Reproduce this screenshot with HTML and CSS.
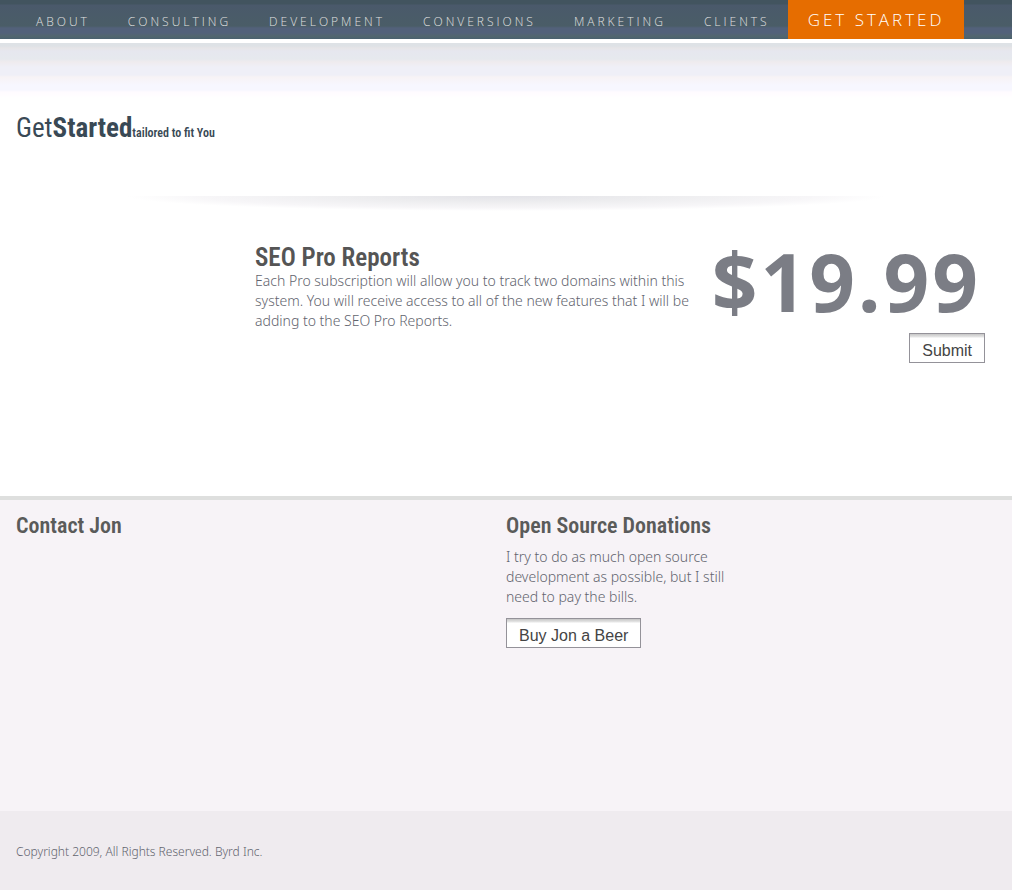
FILE: index.html
```html
<!DOCTYPE html>
<html lang="en">
<head>
<meta charset="utf-8">
<meta name="viewport" content="width=device-width, initial-scale=1">
<title>Get Started</title>
<link rel="stylesheet" href="styles.css">
</head>
<body>
<header>
  <nav class="nav" aria-label="Main">
    <a href="#">ABOUT</a>
    <a href="#">CONSULTING</a>
    <a href="#">DEVELOPMENT</a>
    <a href="#">CONVERSIONS</a>
    <a href="#">MARKETING</a>
    <a href="#">CLIENTS</a>
    <a href="#" class="nav-start">GET STARTED</a>
  </nav>
  <div class="fade"></div>
</header>
<main>
  <h1 class="page-title">Get<strong>Started</strong><small>tailored to fit You</small></h1>
  <svg class="shadow" viewBox="0 0 760 15" preserveAspectRatio="none" aria-hidden="true">
    <defs>
      <radialGradient id="glow" gradientUnits="userSpaceOnUse" cx="0" cy="0" r="1" gradientTransform="translate(380 0) scale(380 15)">
        <stop offset="0" stop-color="#e3e3e8"/>
        <stop offset="0.4" stop-color="#ededef"/>
        <stop offset="0.8" stop-color="#f7f6f8"/>
        <stop offset="1" stop-color="#ffffff"/>
      </radialGradient>
    </defs>
    <rect width="760" height="15" fill="url(#glow)"/>
  </svg>
  <section class="product">
    <div class="product-text">
      <h2 class="product-title">SEO Pro Reports</h2>
      <p>Each Pro subscription will allow you to track two domains within this system. You will receive access to all of the new features that I will be adding to the SEO Pro Reports.</p>
    </div>
    <div class="product-buy">
      <div class="price">$19.99</div>
      <button type="button" class="button">Submit</button>
    </div>
  </section>
</main>
<aside class="bottom">
  <section><h2>Contact Jon</h2></section>
  <section>
    <h2>Open Source Donations</h2>
    <p>I try to do as much open source development as possible, but I still need to pay the bills.</p>
    <button type="button" class="button">Buy Jon a Beer</button>
  </section>
</aside>
<footer class="footer">Copyright 2009, All Rights Reserved. Byrd Inc.</footer>
</body>
</html>
```
FILE: styles.css
```css
* { box-sizing: border-box; }
body {
  display: flex;
  flex-direction: column;
  min-height: 100vh;
  margin: 0;
  background: #fff;
  color: #62646e;
  font: 300 14px/20px "Noto Sans", "Open Sans", sans-serif;
}
h1, h2, p { margin: 0; }
.nav {
  display: flex;
  padding-left: 16px;
  background: linear-gradient(#42545f 0, #42545f 4px, #4a596b 5px, #4a5b69 14px, #4a5d67 26px, #52617a 28px, #52617a 33px, #52666f 36px, #4a616f 39px);
  font-family: "Open Sans", sans-serif;
}
.nav a {
  padding: 12px 18px 7px 20px;
  color: #e0e0e0;
  font-size: 12px;
  letter-spacing: 3px;
  text-decoration: none;
  white-space: nowrap;
}
.nav .nav-start {
  padding: 10px 20px 9px;
  background: #e66d00;
  color: #fff;
  font-size: 17px;
}
.fade {
  height: 55px;
  margin-top: 4px;
  background: linear-gradient(#dee2e6 0, #dee2e6 3px, #e6e5e7 5px, #e6e7ef 8px, #e6e9ee 16px, #efebee 19px, #efeff7 24px, #efeff7 32px, #f7f3f5 34px, #f7f7ff 42px, #f7f7ff 47px, #fffbff 49px, #fff 55px);
}
.page-title, h2 {
  font-family: "Roboto Condensed", Roboto, sans-serif;
  font-weight: 600;
}
.page-title {
  padding: 14px 16px 0;
  color: #394955;
  font-size: 27px;
  line-height: 32px;
  font-weight: 400;
}
.page-title small { font-size: 12px; font-weight: 600; }
.shadow {
  display: block;
  width: 75%;
  height: 15px;
  margin: 47px auto 0;
}
.product {
  display: grid;
  grid-template-columns: 1fr auto;
  min-height: 285px;
  padding: 31px 27px 0 255px;
}
.product-title {
  padding-top: 3px;
  color: #555;
  font-size: 25px;
  line-height: 26px;
}
.product-buy {
  display: flex;
  flex-direction: column;
  align-items: flex-end;
}
.price {
  padding-right: 4px;
  color: #7b7d85;
  font-size: 80px;
  font-weight: 700;
  line-height: 78px;
  letter-spacing: 3px;
}
.button {
  height: 30px;
  padding: 6px 12px 0;
  border: 1px solid #949299;
  border-radius: 0;
  background: linear-gradient(#c6c6c6, #e6e6e6 3px, #fff 4px);
  color: #444;
  font: 16px/22px "Liberation Sans", sans-serif;
}
.product .button { margin-top: 13px; }
.bottom {
  flex: 1;
  display: grid;
  grid-template-columns: 1fr 1fr;
  padding-top: 10px;
  border-top: 4px solid #dedfde;
  background: #f7f3f7;
}
.bottom section:first-child { padding-left: 16px; }
.bottom h2 {
  color: #5a5b5a;
  font-size: 22px;
  line-height: 32px;
}
.bottom p { max-width: 236px; margin: 5px 0 11px; }
.footer {
  padding: 31px 16px 28px;
  background: #efebef;
  font-size: 12px;
}
```
